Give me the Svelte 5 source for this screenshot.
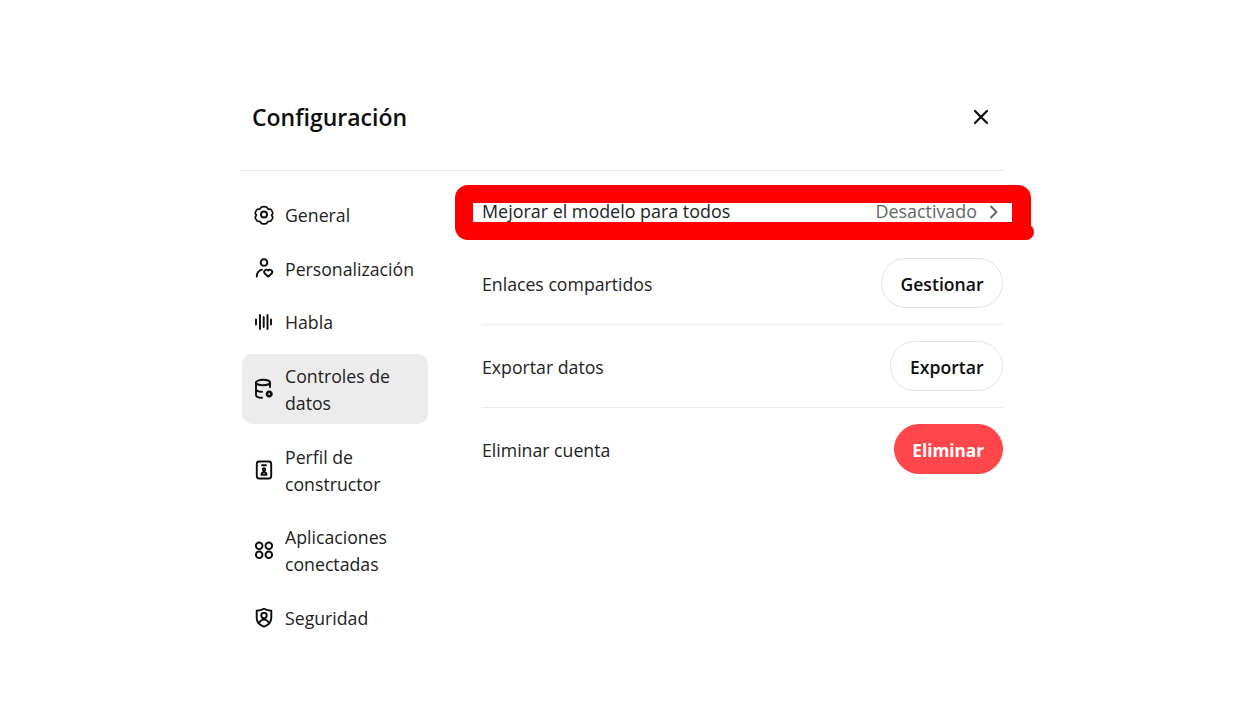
<script>
  const items = [
    { label: 'General', icon: 'gear' },
    { label: 'Personalización', icon: 'person' },
    { label: 'Habla', icon: 'wave' },
    { label: 'Controles de datos', icon: 'db', active: true },
    { label: 'Perfil de constructor', icon: 'badge' },
    { label: 'Aplicaciones conectadas', icon: 'apps' },
    { label: 'Seguridad', icon: 'shield' }
  ];
</script>

<div class="page">
  <section class="dialog">
    <header class="head">
      <h1>Configuración</h1>
      <button class="close" aria-label="Cerrar">
        <svg width="20" height="20" viewBox="0 0 20 20"><path d="M4 4l12 12M16 4L4 16" stroke="#0d0d0d" stroke-width="2.200" stroke-linecap="round" fill="none"/></svg>
      </button>
    </header>
    <div class="body">
      <nav class="side">
        {#each items as it}
          <div class="item" class:active={it.active}>
            <svg class="ico" width="22" height="22" viewBox="0 0 22 22" fill="none" stroke="#0d0d0d" stroke-width="1.900" stroke-linecap="round" stroke-linejoin="round">
              {#if it.icon === 'gear'}
                <path d="M8.300 2.600c1-.6 4.400-.6 5.400 0 .8.500 1 1.800 1.900 2.200 1 .4 2.300-.1 3 .6.800.9 2.300 3.700 2 4.700-.2.600-1.100 1-1.100 1.700s.9 1.100 1.100 1.700c.3 1-1.200 3.800-2 4.700-.7.700-2 .2-3 .6-.9.400-1.100 1.700-1.900 2.200-1 .6-4.400.6-5.400 0-.8-.5-1-1.800-1.900-2.200-1-.4-2.300.1-3-.6-.8-.9-2.300-3.700-2-4.700.2-.6 1.100-1 1.100-1.700s-.9-1.100-1.100-1.700c-.3-1 1.200-3.800 2-4.700.7-.7 2-.2 3-.6.900-.4 1.100-1.700 1.900-2.200z" transform="translate(1.100 .6) scale(.9)"/>
                <circle cx="11" cy="10.500" r="3"/>
              {:else if it.icon === 'person'}
                <circle cx="11" cy="5.600" r="3.300"/>
                <path d="M3.800 19.500c0-3.700 2-6 5.200-6.800"/>
                <path d="M15.200 19.600l-3.700-3.400a2.300 2.300 0 0 1 3.700-2.700 2.300 2.300 0 0 1 3.700 2.700z"/>
              {:else if it.icon === 'wave'}
                <path d="M3 8.500v5M7 4v14M10.700 6v10M14.500 4v14M18 8.500v5"/>
              {:else if it.icon === 'db'}
                <ellipse cx="10" cy="4.500" rx="7" ry="2.700"/>
                <path d="M3 4.500v12.500c0 1.500 2.500 2.700 6 2.700M3 11c0 1.500 2.500 2.700 6 2.700M17 4.500v4.500"/>
                <circle cx="16.200" cy="16" r="2.800" fill="#0d0d0d" stroke-width="1.500" stroke-dasharray="1.600 .6"/>
                <circle cx="16.200" cy="16" r=".9" fill="#ececec" stroke="none"/>
              {:else if it.icon === 'badge'}
                <rect x="3.800" y="2.500" width="14.400" height="17" rx="2.500"/>
                <path d="M9 6.200h4"/>
                <circle cx="11" cy="10.500" r="1.200"/>
                <path d="M8.400 15.800c.4-2 1.400-2.800 2.600-2.800s2.200.8 2.600 2.800z"/>
              {:else if it.icon === 'apps'}
                <circle cx="6.200" cy="6.800" r="3.300"/><circle cx="15.800" cy="6.800" r="3.300"/>
                <circle cx="6.200" cy="15.800" r="3.300"/><circle cx="15.800" cy="15.800" r="3.300"/>
              {:else}
                <path d="M11 1.800c2.600 1.500 4.800 1.900 7.300 2v7c0 4.500-3 7.400-7.300 8.800-4.300-1.400-7.300-4.300-7.300-8.800v-7c2.500-.1 4.700-.5 7.300-2z"/>
                <circle cx="11" cy="8.400" r="2.700"/>
                <path d="M6.300 15.600c1-2 2.800-3 4.700-3s3.700 1 4.700 3"/>
              {/if}
            </svg>
            <span>{it.label}</span>
          </div>
        {/each}
      </nav>
      <main class="main">
        <div class="row first">
          <span>Mejorar el modelo para todos</span>
          <span class="value">Desactivado
            <svg width="20" height="20" viewBox="0 0 20 20" fill="none" stroke="#666" stroke-width="1.900" stroke-linecap="round" stroke-linejoin="round"><path d="M7 4.500l5.500 5.500L7 15.500"/></svg>
          </span>
          <div class="mark"></div>
        </div>
        <div class="row"><span class="lab">Enlaces compartidos</span><button class="btn">Gestionar</button></div>
        <div class="row"><span class="lab">Exportar datos</span><button class="btn">Exportar</button></div>
        <div class="row"><span class="lab">Eliminar cuenta</span><button class="btn danger">Eliminar</button></div>
      </main>
    </div>
  </section>
</div>

<style>
  :global(body) { margin: 0; background: #fff; }
  .page {
    width: 1252px;
    height: 704px;
    box-sizing: border-box;
    padding: 90px 0 0 240px;
    font-family: "Open Sans", "Noto Sans", sans-serif;
    color: #0d0d0d;
    overflow: hidden;
  }
  .dialog { width: 765px; }
  .head {
    height: 81px;
    box-sizing: border-box;
    border-bottom: 1px solid #e8e8e8;
    display: flex;
    align-items: flex-start;
    justify-content: space-between;
    padding: 10px 10px 0 12px;
  }
  h1 { margin: 0; font-size: 23px; line-height: 34px; font-weight: 600; }
  .close { border: 0; background: none; padding: 7px 4px; line-height: 0; }
  .body { display: flex; padding-top: 23px; }
  .side {
    width: 186px;
    margin-left: 2px;
    margin-top: -1px;
    display: flex;
    flex-direction: column;
    gap: 10.700px;
  }
  .item {
    display: flex;
    align-items: center;
    gap: 10px;
    padding: 8px 12px 8px 11px;
    border-radius: 10px;
    font-size: 17.700px;
    line-height: 27px;
    color: #222;
  }
  .item span { position: relative; top: 1px; }
  .item.active { background: #ececec; }
  .ico { flex: none; }
  .main { width: 521px; margin-left: 54px; margin-top: -9px; }
  .row {
    position: relative;
    display: flex;
    align-items: center;
    justify-content: space-between;
    padding: 16px 0;
    font-size: 17.900px;
    color: #222;
    border-bottom: 1px solid #ececec;
  }
  .row:last-child { border-bottom: 0; }
  .lab { position: relative; top: 1px; font-size: 17.700px; }
  .first { box-sizing: border-box; height: 57px; padding: 17px 0 21px; line-height: 19px; border-bottom: 0; }
  .value { display: flex; align-items: center; gap: 7px; color: #666; margin-right: -1px; }
  .mark {
    position: absolute;
    left: -27px;
    top: 0;
    width: 539px;
    height: 19px;
    border: solid #ff0000;
    border-width: 18px 19px 18px 18px;
    border-radius: 13px;
    pointer-events: none;
  }
  .mark::after {
    content: "";
    position: absolute;
    right: -22px;
    bottom: -18px;
    width: 22px;
    height: 16px;
    border-radius: 8px;
    background: #ff0000;
  }
  .btn {
    height: 50px;
    box-sizing: border-box;
    border: 1px solid #e3e3e3;
    border-radius: 25px;
    background: #fff;
    padding: 2px 18.500px 0;
    font: 600 17.600px "Open Sans", "Noto Sans", sans-serif;
    color: #0d0d0d;
  }
  .danger { background: #fe464b; border-color: #fe464b; color: #fff; font-size: 17.200px; font-weight: 700; padding: 2px 18px 0 17px; }
</style>
